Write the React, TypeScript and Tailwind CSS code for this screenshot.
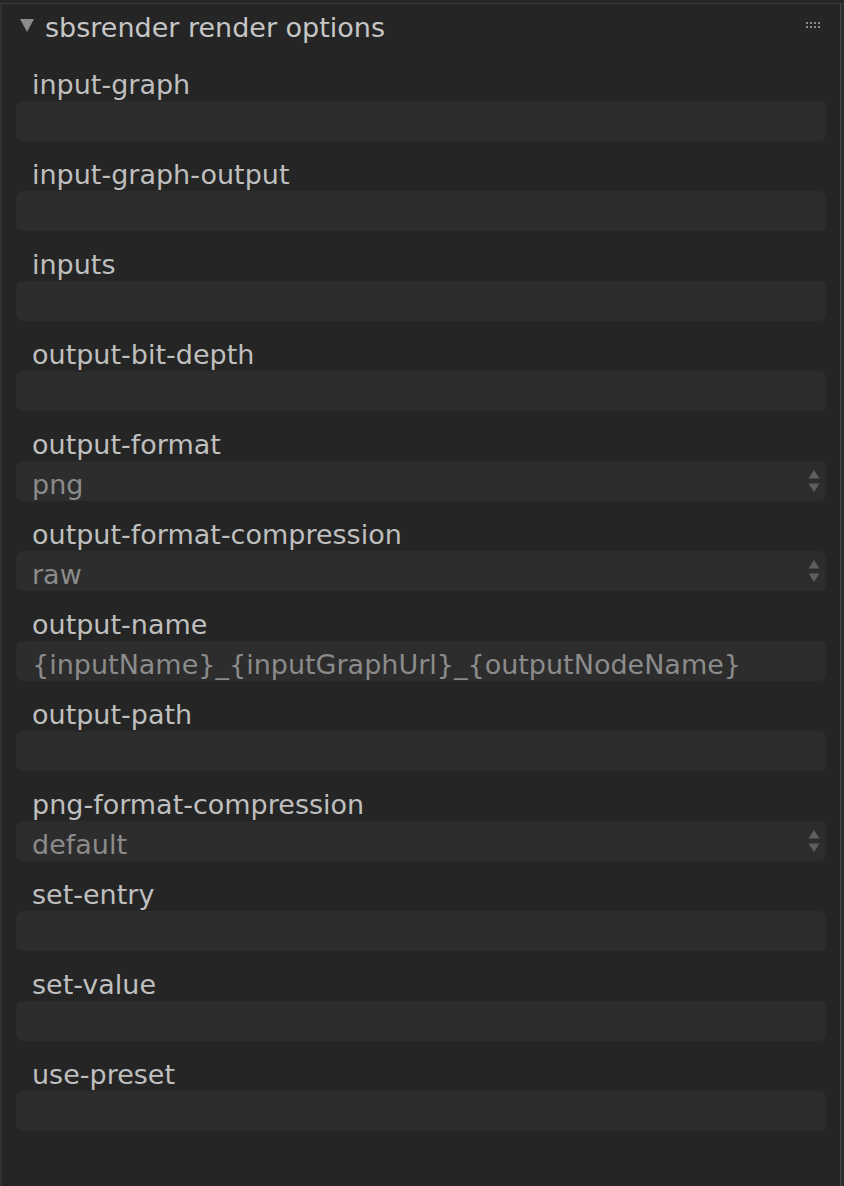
import React from "react";

type Field = {
  label: string;
  value?: string;
  select?: boolean;
};

const fields: Field[] = [
  { label: "input-graph" },
  { label: "input-graph-output" },
  { label: "inputs" },
  { label: "output-bit-depth" },
  { label: "output-format", value: "png", select: true },
  { label: "output-format-compression", value: "raw", select: true },
  { label: "output-name", value: "{inputName}_{inputGraphUrl}_{outputNodeName}" },
  { label: "output-path" },
  { label: "png-format-compression", value: "default", select: true },
  { label: "set-entry" },
  { label: "set-value" },
  { label: "use-preset" },
];

const SpinArrows = () => (
  <svg width="12" height="24" viewBox="0 0 12 24" className="shrink-0">
    <path d="M6 1 L11.5 9.5 L0.5 9.5 Z" fill="#5f5f5f" />
    <path d="M0.5 14.5 L11.5 14.5 L6 23 Z" fill="#5f5f5f" />
  </svg>
);

const Grip = () => (
  <svg width="16" height="8" viewBox="0 0 16 8">
    {[0, 4, 8, 12].map((x) => (
      <React.Fragment key={x}>
        <rect x={x} y={0} width="2" height="2" fill="#8a8a8a" />
        <rect x={x} y={4} width="2" height="2" fill="#8a8a8a" />
      </React.Fragment>
    ))}
  </svg>
);

const FieldRow = ({ label, value, select }: Field) => (
  <div className="flex flex-col pt-[18px]">
    <div className="h-[30px] pl-4 text-[27px] leading-[32px] text-[#bfbfbf]">{label}</div>
    <div className="mt-[2px] flex h-10 items-center justify-between rounded-[7px] bg-[#2d2d2d] pl-4 pr-[6px]">
      <span className="mt-[8px] text-[27px] leading-[40px] text-[#8b8b8b]">{value}</span>
      {select && <SpinArrows />}
    </div>
  </div>
);

export default function App() {
  return (
    <div
      className="flex h-[1186px] w-[844px] flex-col overflow-hidden bg-[#252525]"
      style={{ fontFamily: '"DejaVu Sans", Verdana, sans-serif' }}
    >
      {/* cut-off tab above */}
      <div className="h-[3px] overflow-hidden pl-[88px]">
        <div className="-mt-[22px] text-[27px] leading-[24px] text-[#cfcfcf]">Edit</div>
      </div>
      <div className="h-px bg-[#3d3d3d]" />
      <div className="flex flex-1">
        <div className="w-[2px] bg-[#303030]" />
        <div className="flex flex-1 flex-col pl-[14px] pr-[14px]">
          <div className="flex h-[47px] items-center">
            <svg width="14" height="13" viewBox="0 0 14 13" className="ml-[4px] -mt-[4px] shrink-0">
              <path d="M0 0 L14 0 L7 13 Z" fill="#8c8c8c" />
            </svg>
            <span className="ml-[11px] text-[27px] leading-[30px] text-[#c6c6c6]">sbsrender render options</span>
            <div className="ml-auto mr-[4px] -mt-[4px]">
              <Grip />
            </div>
          </div>
          {fields.map((f) => (
            <FieldRow key={f.label} {...f} />
          ))}
        </div>
        <div className="w-px bg-[#474747]" />
        <div className="w-[3px] bg-[#2c2c2c]" />
      </div>
    </div>
  );
}
